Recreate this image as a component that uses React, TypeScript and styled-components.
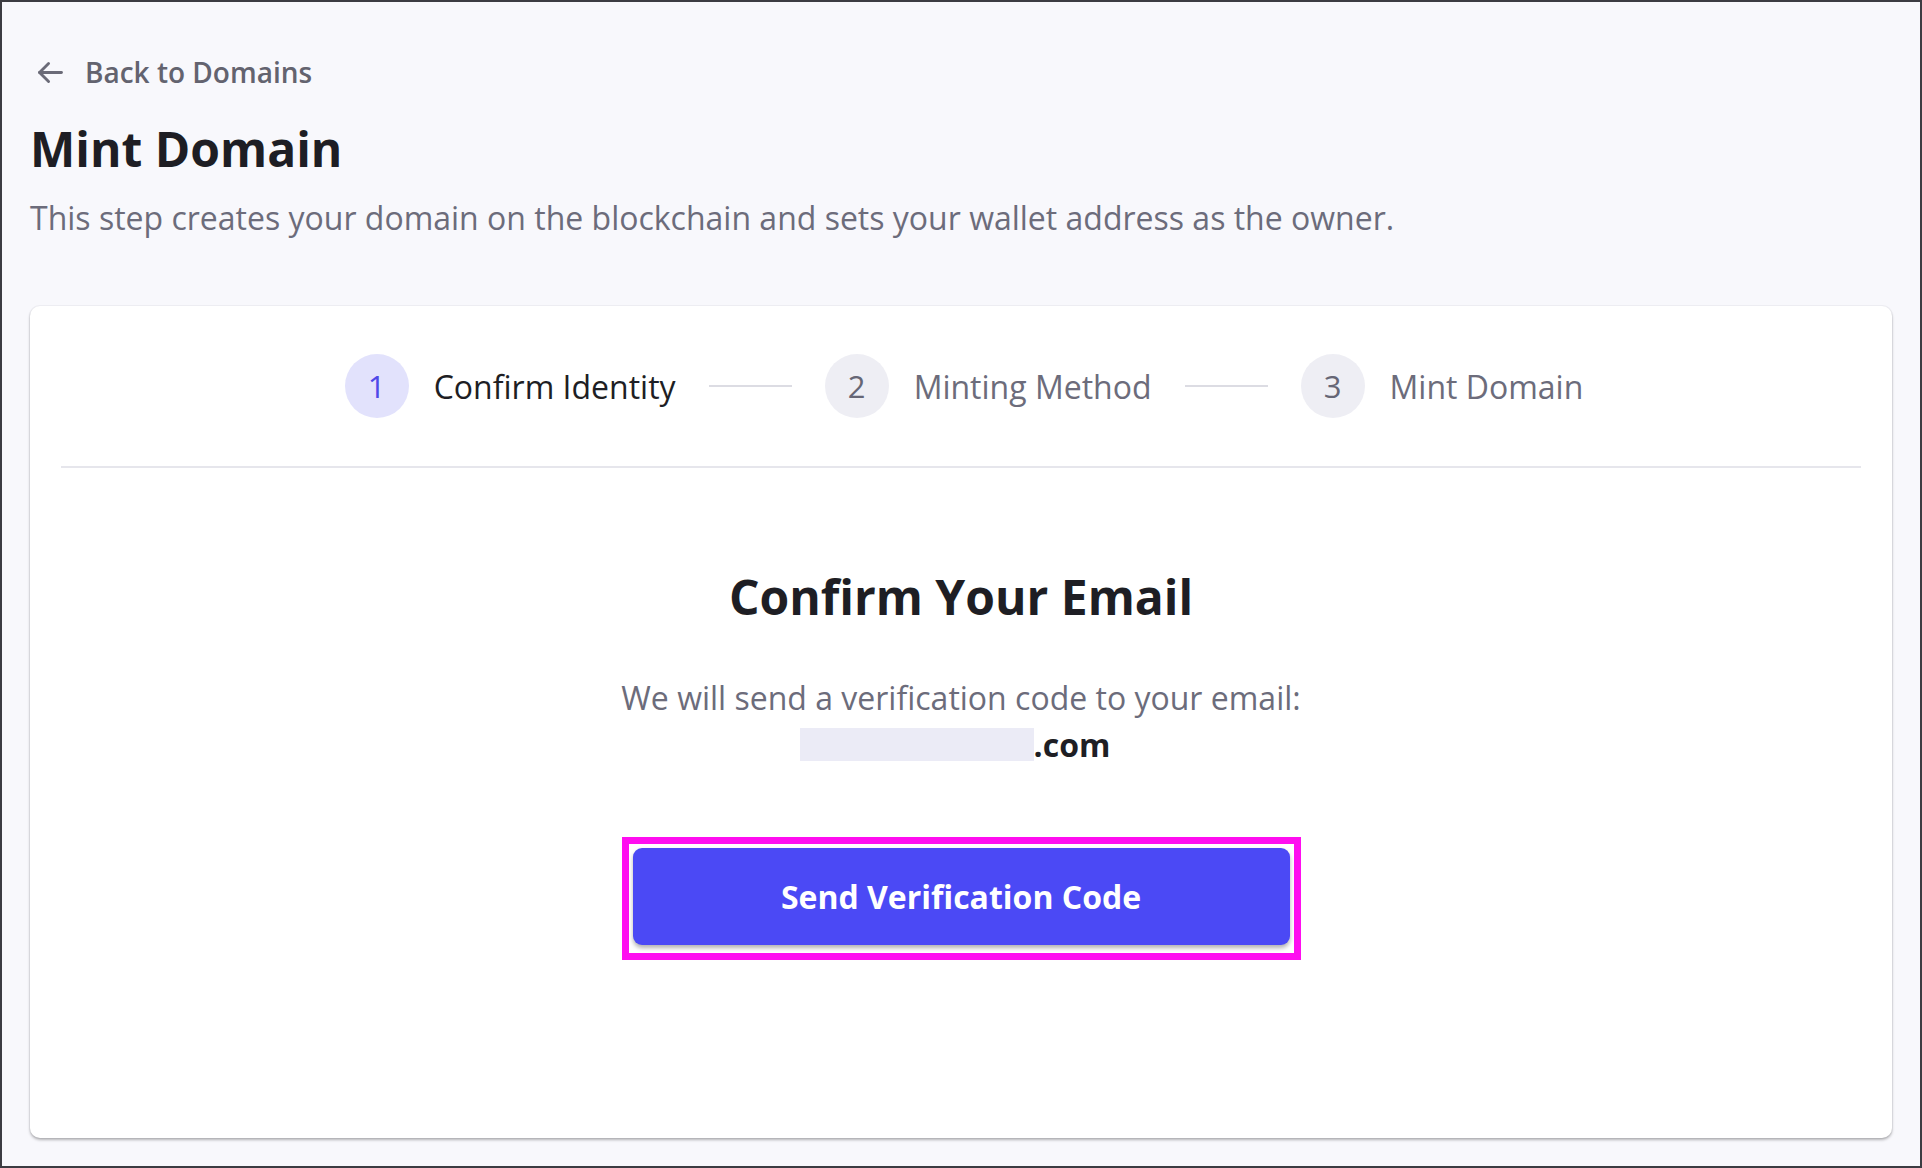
import React from "react";
import styled, { createGlobalStyle } from "styled-components";

const GlobalStyle = createGlobalStyle`
  html, body {
    margin: 0;
    padding: 0;
    height: 100%;
  }

  body {
    font-family: "Open Sans", "Noto Sans", sans-serif;
    background: #f8f8fc;
  }

  #root {
    height: 100%;
  }
`;

const Frame = styled.div`
  box-sizing: border-box;
  height: 1168px;
  border: 2px solid #3c3c42;
  background: #f8f8fc;
  display: flex;
  flex-direction: column;
  padding: 0 28px 28px;
`;

const BackLink = styled.a`
  display: flex;
  align-items: center;
  gap: 19px;
  margin-top: 50px;
  height: 40px;
  color: #63636f;
  font-size: 28px;
  font-weight: 600;
  text-decoration: none;
  cursor: pointer;

  svg {
    margin-left: 5px;
  }
`;

const Title = styled.h1`
  margin: 27px 0 0;
  font-size: 48px;
  line-height: 60px;
  font-weight: 700;
  color: #1e1e24;
`;

const Subtitle = styled.p`
  margin: 19px 0 0;
  font-size: 32px;
  line-height: 40px;
  color: #6c6c7b;
`;

const Card = styled.section`
  flex: 1;
  margin-top: 68px;
  background: #fff;
  border-radius: 10px;
  box-shadow: 0 0 0 1px rgba(20, 20, 60, 0.04), 0 2px 3px rgba(0, 0, 0, 0.28);
  display: flex;
  flex-direction: column;
`;

const Stepper = styled.div`
  display: flex;
  justify-content: center;
  align-items: center;
  padding: 48px 0 48px 6px;
  margin: 0 31px;
  border-bottom: 2px solid #e6e6ec;
`;

const Step = styled.div`
  display: flex;
  align-items: center;
  gap: 25px;
`;

const StepNumber = styled.div<{ $active?: boolean }>`
  width: 64px;
  height: 64px;
  border-radius: 50%;
  display: flex;
  align-items: center;
  justify-content: center;
  font-size: 31px;
  font-weight: 500;
  background: ${(p) => (p.$active ? "#e2e2fc" : "#eeeef4")};
  color: ${(p) => (p.$active ? "#4f49e8" : "#666675")};
`;

const StepLabel = styled.span<{ $active?: boolean }>`
  font-size: 32px;
  color: ${(p) => (p.$active ? "#1e1e24" : "#6c6c7b")};
`;

const Connector = styled.div`
  width: 83px;
  height: 2px;
  background: #dcdce3;
  margin: 0 33px;
`;

const Body = styled.div`
  display: flex;
  flex-direction: column;
  align-items: center;
  padding-top: 97px;
  text-align: center;
`;

const Heading = styled.h2`
  margin: 0;
  font-size: 48px;
  line-height: 64px;
  font-weight: 700;
  color: #1e1e24;
`;

const Description = styled.p`
  margin: 45px 0 0;
  font-size: 32px;
  line-height: 47px;
  color: #6c6c7b;
`;

const EmailLine = styled.span`
  display: flex;
  align-items: center;
  justify-content: center;
  padding-right: 12px;
  color: #1e1e24;
  font-weight: 700;
`;

const Redacted = styled.span`
  display: inline-block;
  width: 234px;
  height: 33px;
  background: #ebebf6;
`;

const Highlight = styled.div`
  margin-top: 69px;
  border: 7px solid #ff0df0;
  padding: 4px 4px 8px;
`;

const PrimaryButton = styled.button`
  width: 657px;
  height: 97px;
  border: none;
  border-radius: 9px;
  background: #4b49f5;
  color: #fff;
  font-family: inherit;
  font-size: 32px;
  font-weight: 700;
  box-shadow: 0 3px 4px rgba(0, 0, 0, 0.3);
  cursor: pointer;
`;

const steps = [
  { n: 1, label: "Confirm Identity" },
  { n: 2, label: "Minting Method" },
  { n: 3, label: "Mint Domain" },
];

function ArrowLeft() {
  return (
    <svg width="31" height="31" viewBox="0 0 24 24" fill="none" stroke="#6b6b78" strokeWidth="2.2" strokeLinecap="round" strokeLinejoin="round">
      <path d="M20.5 12H3.5" />
      <path d="M10.5 5l-7 7 7 7" />
    </svg>
  );
}

export default function App() {
  const current = 1;

  return (
    <>
      <GlobalStyle />
      <Frame>
        <BackLink>
          <ArrowLeft />
          Back to Domains
        </BackLink>
        <Title>Mint Domain</Title>
        <Subtitle>
          This step creates your domain on the blockchain and sets your wallet address as the owner.
        </Subtitle>

        <Card>
          <Stepper>
            {steps.map((step, i) => (
              <React.Fragment key={step.n}>
                {i > 0 && <Connector />}
                <Step>
                  <StepNumber $active={step.n === current}>{step.n}</StepNumber>
                  <StepLabel $active={step.n === current}>{step.label}</StepLabel>
                </Step>
              </React.Fragment>
            ))}
          </Stepper>

          <Body>
            <Heading>Confirm Your Email</Heading>
            <Description>
              We will send a verification code to your email:
              <EmailLine>
                <Redacted />
                .com
              </EmailLine>
            </Description>
            <Highlight>
              <PrimaryButton type={"button"}>Send Verification Code</PrimaryButton>
            </Highlight>
          </Body>
        </Card>
      </Frame>
    </>
  );
}
